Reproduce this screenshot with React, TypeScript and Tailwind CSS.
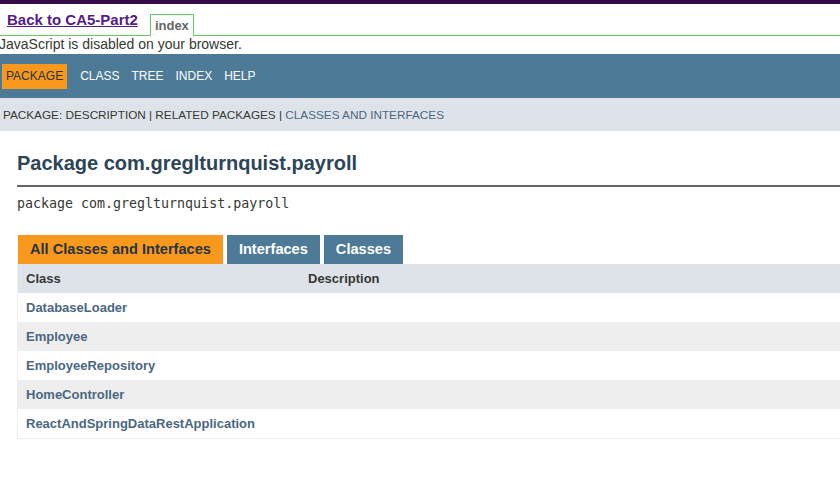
import React from 'react';

const classes = [
  'DatabaseLoader',
  'Employee',
  'EmployeeRepository',
  'HomeController',
  'ReactAndSpringDataRestApplication',
];

const App: React.FC = () => {
  return (
    <div className="min-h-[492px] w-[840px] overflow-hidden bg-white font-['Liberation_Sans',Arial,sans-serif] text-[#353833]">
      {/* top strip */}
      <div className="h-[4px] bg-[#350a48]" />

      {/* back link + index tab */}
      <div className="flex h-[32px] items-end border-b border-[#66cc66] pl-[7px]">
        <a href="#" className="mb-[7px] text-[15px] font-bold leading-[17px] text-[#551a8b] underline">
          Back to CA5-Part2
        </a>
        <div className="-mb-px ml-[12px] flex h-[22px] items-center border border-b-0 border-[#66cc66] bg-white px-[4px] text-[13px] font-bold text-[#666]">
          index
        </div>
      </div>
      <div className="-ml-[1px] h-[18px] text-[14px] leading-[17px]">JavaScript is disabled on your browser.</div>

      {/* nav */}
      <div className="flex h-[44px] items-center bg-[#4d7a97] pl-[2px] text-[12px] text-white">
        <span className="flex h-[25px] items-center bg-[#f8981d] px-[4px] text-[#253441]">PACKAGE</span>
        <div className="ml-[13px] flex gap-[12px]">
          <span>CLASS</span>
          <span>TREE</span>
          <span>INDEX</span>
          <span>HELP</span>
        </div>
      </div>
      <div className="flex h-[33px] items-center bg-[#dee3e9] pl-[3px] text-[11.75px]">
        <span>PACKAGE:&nbsp;DESCRIPTION&nbsp;|&nbsp;RELATED PACKAGES&nbsp;|&nbsp;</span>
        <span className="text-[#4a6782]">CLASSES AND INTERFACES</span>
      </div>

      {/* main */}
      <div className="pl-[17px]">
        <h1 className="mt-[19px] h-[26px] text-[20px] font-bold leading-[26px] text-[#2c4557]">
          Package com.greglturnquist.payroll
        </h1>
        <div className="mt-[9px] h-[2px] bg-[#666]" />
        <div className="mt-[9px] font-['DejaVu_Sans_Mono',monospace] text-[13.3px] leading-[16px]">
          package com.greglturnquist.payroll
        </div>

        <div className="mt-[23px] flex gap-[4px] pl-[1px] text-[14.6px] font-bold">
          <div className="flex h-[29px] items-center bg-[#f8981d] px-[12px] text-[#253441]">All Classes and Interfaces</div>
          <div className="flex h-[29px] items-center bg-[#4d7a97] px-[12px] text-white">Interfaces</div>
          <div className="flex h-[29px] items-center bg-[#4d7a97] px-[12px] text-white">Classes</div>
        </div>

        <div className="border-b border-l border-[#eeeeee] text-[13px] font-bold">
          <div className="grid h-[29px] grid-cols-[289px_1fr] items-center bg-[#dee3e9]">
            <span className="pl-[8px]">Class</span>
            <span className="pl-[1px]">Description</span>
          </div>
          {classes.map((name, i) => (
            <div
              key={name}
              className={`grid h-[29px] grid-cols-[289px_1fr] items-center ${i % 2 === 1 ? 'bg-[#eeeeee]' : 'bg-white'}`}
            >
              <a href="#" className="pl-[8px] text-[#4a6782]">{name}</a>
              <span />
            </div>
          ))}
        </div>
      </div>
    </div>
  );
};

export default App;
